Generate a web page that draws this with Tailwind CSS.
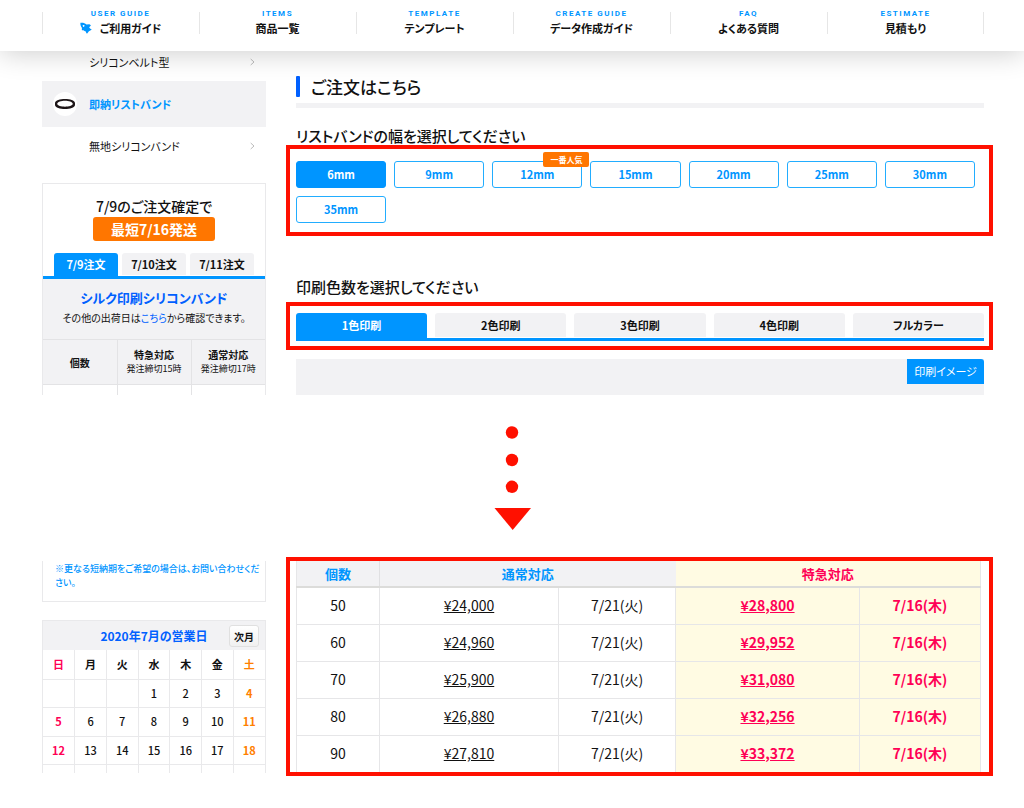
<!DOCTYPE html>
<html lang="ja">
<head>
<meta charset="utf-8">
<meta name="viewport" content="width=device-width, initial-scale=1">
<title>リストバンドのご注文</title>
<script src="https://cdn.jsdelivr.net/npm/@tailwindcss/browser@4"></script>
</head>
<body class="bg-white text-[#111] font-['Noto_Sans_CJK_JP',sans-serif] [font-feature-settings:'palt']">

<header class="relative z-10 h-[51px] bg-white pl-[42px] pr-10 pt-2 shadow-[0_2px_28px_rgba(0,0,0,0.2)]">
  <nav class="grid grid-cols-6" aria-label="メイン">
    <a href="#" class="relative flex flex-col items-center before:absolute before:left-0 before:top-1 before:h-[22px] before:w-px before:bg-[#e6e6e6]">
      <span class="font-['Roboto'] text-[8px] leading-3 font-bold tracking-[1.5px] text-[#0095ff]">USER GUIDE</span>
      <span class="flex items-center gap-2 text-[11px] leading-4 font-bold">
        <svg class="h-3 w-3" viewBox="0 0 12 12" fill="#0095ff" aria-hidden="true"><path fill-rule="evenodd" d="M.4.8C2.600.4 4.800.9 6.500 2.400L9.300 2.300C10 2.500 10.500 2.900 10.900 3.600L9.200 5.300C9.800 6.200 10.200 6.800 11.800 7.600 10.800 8.500 9.800 9 8.900 9.200L7 11.700C6.300 11.300 5.900 10.500 5.800 9.500 4.800 9.300 4.100 8.900 3.500 8.200L2 8.300C1.700 7.600 1.700 6.900 2 6.100.8 4.600.2 2.700.4.800ZM3.600 3a.9.9 0 1 0 .01 0Z"/></svg>
        ご利用ガイド</span>
    </a>
    <a href="#" class="relative flex flex-col items-center before:absolute before:left-0 before:top-1 before:h-[22px] before:w-px before:bg-[#e6e6e6]">
      <span class="font-['Roboto'] text-[8px] leading-3 font-bold tracking-[1.5px] text-[#0095ff]">ITEMS</span>
      <span class="text-[11px] leading-4 font-bold">商品一覧</span>
    </a>
    <a href="#" class="relative flex flex-col items-center before:absolute before:left-0 before:top-1 before:h-[22px] before:w-px before:bg-[#e6e6e6]">
      <span class="font-['Roboto'] text-[8px] leading-3 font-bold tracking-[1.5px] text-[#0095ff]">TEMPLATE</span>
      <span class="text-[11px] leading-4 font-bold">テンプレート</span>
    </a>
    <a href="#" class="relative flex flex-col items-center before:absolute before:left-0 before:top-1 before:h-[22px] before:w-px before:bg-[#e6e6e6]">
      <span class="font-['Roboto'] text-[8px] leading-3 font-bold tracking-[1.5px] text-[#0095ff]">CREATE GUIDE</span>
      <span class="text-[11px] leading-4 font-bold">データ作成ガイド</span>
    </a>
    <a href="#" class="relative flex flex-col items-center before:absolute before:left-0 before:top-1 before:h-[22px] before:w-px before:bg-[#e6e6e6]">
      <span class="font-['Roboto'] text-[8px] leading-3 font-bold tracking-[1.5px] text-[#0095ff]">FAQ</span>
      <span class="text-[11px] leading-4 font-bold">よくある質問</span>
    </a>
    <a href="#" class="relative flex flex-col items-center before:absolute before:left-0 before:top-1 before:h-[22px] before:w-px before:bg-[#e6e6e6] after:absolute after:right-0 after:top-1 after:h-[22px] after:w-px after:bg-[#e6e6e6]">
      <span class="font-['Roboto'] text-[8px] leading-3 font-bold tracking-[1.5px] text-[#0095ff]">ESTIMATE</span>
      <span class="text-[11px] leading-4 font-bold">見積もり</span>
    </a>
  </nav>
</header>

<section class="flex gap-5 pl-[42px] pr-[31px]">
  <aside class="w-56 shrink-0">
    <nav aria-label="商品">
      <a href="#" class="flex h-[22px] items-center justify-between pl-[47px] pr-[11px] text-[11px]">シリコンベルト型
        <svg class="h-2 w-[5px]" viewBox="0 0 5 8" fill="none" stroke="#bbb" aria-hidden="true"><path d="M.7 1 4 4 .7 7"/></svg></a>
      <a href="#" class="mt-2 flex h-[46px] items-center gap-3 bg-[#f2f2f4] pl-[11px] text-[11px] font-bold text-[#0095ff]">
        <svg class="h-6 w-6" viewBox="0 0 24 24" aria-hidden="true"><circle cx="12" cy="12" r="12" fill="#fff"/><path fill="#1d1517" fill-rule="evenodd" d="M2 11C2.500 5.700 21.500 5.700 22 11V13C21.500 18.300 2.500 18.300 2 13ZM4.200 11.800C4.700 15.600 19.300 15.600 19.800 11.800 19.300 7.600 4.700 7.600 4.200 11.800Z"/></svg>
        即納リストバンド</a>
      <a href="#" class="flex h-[38px] items-center justify-between pl-[47px] pr-[11px] text-[11px]">無地シリコンバンド
        <svg class="h-2 w-[5px]" viewBox="0 0 5 8" fill="none" stroke="#bbb" aria-hidden="true"><path d="M.7 1 4 4 .7 7"/></svg></a>
    </nav>

    <div class="mt-[18px] h-[212px] overflow-hidden border border-b-0 border-[#e9e9eb]">
      <div class="flex flex-col items-center pt-3 text-[14px]">
        <p class="leading-5 font-medium">7/9のご注文確定で</p>
        <p class="mt-px h-6 w-[122px] rounded-[3px] bg-[#ff7600] text-center leading-6 font-bold text-white">最短7/16発送</p>
      </div>
      <div class="mt-3 grid grid-cols-3 gap-1 border-b-3 border-[#0095ff] px-[11px] text-[11px] font-bold">
        <button type="button" class="h-[23px] rounded-t-[3px] bg-[#0095ff] text-white">7/9注文</button>
        <button type="button" class="h-[22px] rounded-t-[3px] bg-[#f2f2f4]">7/10注文</button>
        <button type="button" class="h-[22px] rounded-t-[3px] bg-[#f2f2f4]">7/11注文</button>
      </div>
      <div class="h-[60px] bg-[#f2f2f4] pt-[9px] text-center">
        <h2 class="text-[13px] leading-5 font-bold text-[#0060ff]">シルク印刷シリコンバンド</h2>
        <p class="text-[10px] leading-5">その他の出荷日は<a href="#" class="text-[#0060ff]">こちら</a>から確認できます。</p>
      </div>
      <table class="w-full table-fixed border-collapse text-[10px]">
        <thead class="bg-[#f2f2f4]">
          <tr class="h-[45px] border-y border-[#e3e3e5]">
            <th scope="col" class="border-r border-[#e3e3e5] font-bold">個数</th>
            <th scope="col" class="border-r border-[#e3e3e5] leading-[14px] font-bold">特急対応<span class="block text-[9px] font-normal">発注締切15時</span></th>
            <th scope="col" class="leading-[14px] font-bold">通常対応<span class="block text-[9px] font-normal">発注締切17時</span></th>
          </tr>
        </thead>
        <tbody>
          <tr class="h-7"><td class="border-r border-[#e3e3e5]"></td><td class="border-r border-[#e3e3e5]"></td><td></td></tr>
        </tbody>
      </table>
    </div>
  </aside>

  <main class="min-w-0 flex-1">
    <h1 class="mr-[9px] ml-[10px] flex h-[57px] items-end border-b-5 border-[#f2f2f4] pb-[6px] text-[17px] leading-[21px] font-medium"><span class="mr-[11px] h-[21px] w-1 rounded-[1px] bg-[#0060ff]"></span>ご注文はこちら</h1>
    <h2 class="mt-[18px] ml-[10px] h-[19px] text-[15px] leading-5 font-medium">リストバンドの幅を選択してください</h2>
    <div class="h-[91px] border-4 border-[#ff1000] pt-3 pr-[14px] pl-[6px]">
      <div class="grid grid-cols-7 gap-2 text-[11px] font-bold text-[#0095ff]">
        <button type="button" class="h-[27px] rounded-[3px] border border-[#0095ff] bg-[#0095ff] text-white">6mm</button>
        <button type="button" class="h-[27px] rounded-[3px] border border-[#22adff]">9mm</button>
        <button type="button" class="relative h-[27px] rounded-[3px] border border-[#22adff]">12mm<span class="absolute -top-[10px] -right-2 h-[15px] w-[46px] rounded-[2px] bg-[#ff7600] text-center text-[8px] leading-[15px] text-white">一番人気</span></button>
        <button type="button" class="h-[27px] rounded-[3px] border border-[#22adff]">15mm</button>
        <button type="button" class="h-[27px] rounded-[3px] border border-[#22adff]">20mm</button>
        <button type="button" class="h-[27px] rounded-[3px] border border-[#22adff]">25mm</button>
        <button type="button" class="h-[27px] rounded-[3px] border border-[#22adff]">30mm</button>
        <button type="button" class="h-[27px] rounded-[3px] border border-[#22adff]">35mm</button>
      </div>
    </div>
    <h2 class="mt-[41px] ml-[10px] h-[25px] text-[15px] leading-5 font-medium">印刷色数を選択してください</h2>
    <div class="h-12 border-4 border-[#ff1000] pt-[7px] pr-[5px] pl-[6px]">
      <div class="grid grid-cols-5 gap-2 border-b-3 border-[#0095ff] text-[11px] font-bold">
        <button type="button" class="h-[25px] rounded-t-[3px] bg-[#0095ff] text-white">1色印刷</button>
        <button type="button" class="h-6 rounded-t-[3px] bg-[#f2f2f4]">2色印刷</button>
        <button type="button" class="h-6 rounded-t-[3px] bg-[#f2f2f4]">3色印刷</button>
        <button type="button" class="h-6 rounded-t-[3px] bg-[#f2f2f4]">4色印刷</button>
        <button type="button" class="h-6 rounded-t-[3px] bg-[#f2f2f4]">フルカラー</button>
      </div>
    </div>
    <div class="mt-[9px] mr-[9px] ml-[10px] flex h-9 items-start justify-end bg-[#f2f2f4]">
      <button type="button" class="h-[25px] w-[77px] rounded-tr-[3px] bg-[#0095ff] text-[11px] text-white">印刷イメージ</button>
    </div>
  </main>
</section>

<div class="flex h-[162px] justify-center pt-[31px]">
  <svg class="h-[104px] w-[38px]" viewBox="0 0 38 104" fill="#ff1000" aria-hidden="true"><circle cx="19" cy="6.500" r="6.200"/><circle cx="19" cy="34" r="6.200"/><circle cx="19" cy="60.800" r="6.200"/><path d="M1.500 82H38L19.700 104Z"/></svg>
</div>

<section class="flex gap-5 pl-[42px] pr-[31px]">
  <aside class="w-56 shrink-0 pt-1">
    <p class="h-[41px] border border-t-0 border-[#e9e9eb] pr-1 pl-3 pt-px text-[9px] leading-[14px] font-medium text-[#0095ff]">※更なる短納期をご希望の場合は、お問い合わせください。</p>
    <div class="mt-[18px] h-[153px] overflow-hidden border-x border-[#e9e9eb]">
      <div class="relative flex h-[30px] items-center justify-center border-t border-[#e9e9eb] bg-[#f2f2f4]">
        <h2 class="text-[12px] font-bold text-[#0060ff]">2020年7月の営業日</h2>
        <button type="button" class="absolute top-1 right-[6px] h-[22px] w-[30px] rounded-[3px] border border-[#e0e0e0] bg-linear-to-b from-white to-[#f0f0f0] text-[10px] font-bold">次月</button>
      </div>
      <table class="w-full table-fixed border-collapse text-center text-[11px] font-medium [&_td]:border-r [&_td]:border-[#e9e9eb] [&_th]:border-r [&_th]:border-[#e9e9eb] [&_td:last-child]:border-r-0 [&_th:last-child]:border-r-0">
        <thead><tr class="h-[29px] border-b border-[#e9e9eb]">
          <th scope="col" class="text-[#ff0055]">日</th><th scope="col">月</th><th scope="col">火</th><th scope="col">水</th><th scope="col">木</th><th scope="col">金</th><th scope="col" class="text-[#ff8000]">土</th></tr></thead>
        <tbody>
          <tr class="h-7 border-b border-[#e9e9eb]"><td></td><td></td><td></td><td>1</td><td>2</td><td>3</td><td class="font-bold text-[#ff8000]">4</td></tr>
          <tr class="h-[29px] border-b border-[#e9e9eb]"><td class="font-bold text-[#ff0055]">5</td><td>6</td><td>7</td><td>8</td><td>9</td><td>10</td><td class="font-bold text-[#ff8000]">11</td></tr>
          <tr class="h-7 border-b border-[#e9e9eb]"><td class="font-bold text-[#ff0055]">12</td><td>13</td><td>14</td><td>15</td><td>16</td><td>17</td><td class="font-bold text-[#ff8000]">18</td></tr>
          <tr class="h-7"><td></td><td></td><td></td><td></td><td></td><td></td><td></td></tr>
        </tbody>
      </table>
    </div>
  </aside>

  <div class="h-[219px] min-w-0 flex-1 overflow-hidden border-4 border-[#ff1000] pr-2 pl-[6px]">
    <table class="w-full table-fixed border-collapse border-x border-[#e6e6e8] text-center text-[14px] [&_td]:border [&_td]:border-[#e6e6e8]">
      <colgroup><col class="w-[83px]"><col class="w-[179px]"><col class="w-[117px]"><col class="w-[184px]"><col></colgroup>
      <thead>
        <tr class="h-[26px] border-b-2 border-[#dcdcda] text-[13px] font-bold">
          <th scope="col" class="border-r border-r-[#e0e0e2] bg-[#f2f2f4] text-[#0095ff]">個数</th>
          <th scope="col" colspan="2" class="bg-[#f2f2f4] text-[#0095ff]">通常対応</th>
          <th scope="col" colspan="2" class="bg-[#fffbe3] text-[#ff0055]">特急対応</th>
        </tr>
      </thead>
      <tbody>
        <tr class="h-[37px]"><td>50</td><td><a href="#" class="underline">¥24,000</a></td><td>7/21(火)</td><td class="bg-[#fffbe3] font-bold text-[#ff0055]"><a href="#" class="underline">¥28,800</a></td><td class="bg-[#fffbe3] font-bold text-[#ff0055]">7/16(木)</td></tr>
        <tr class="h-[37px]"><td>60</td><td><a href="#" class="underline">¥24,960</a></td><td>7/21(火)</td><td class="bg-[#fffbe3] font-bold text-[#ff0055]"><a href="#" class="underline">¥29,952</a></td><td class="bg-[#fffbe3] font-bold text-[#ff0055]">7/16(木)</td></tr>
        <tr class="h-[37px]"><td>70</td><td><a href="#" class="underline">¥25,900</a></td><td>7/21(火)</td><td class="bg-[#fffbe3] font-bold text-[#ff0055]"><a href="#" class="underline">¥31,080</a></td><td class="bg-[#fffbe3] font-bold text-[#ff0055]">7/16(木)</td></tr>
        <tr class="h-[37px]"><td>80</td><td><a href="#" class="underline">¥26,880</a></td><td>7/21(火)</td><td class="bg-[#fffbe3] font-bold text-[#ff0055]"><a href="#" class="underline">¥32,256</a></td><td class="bg-[#fffbe3] font-bold text-[#ff0055]">7/16(木)</td></tr>
        <tr class="h-[37px]"><td>90</td><td><a href="#" class="underline">¥27,810</a></td><td>7/21(火)</td><td class="bg-[#fffbe3] font-bold text-[#ff0055]"><a href="#" class="underline">¥33,372</a></td><td class="bg-[#fffbe3] font-bold text-[#ff0055]">7/16(木)</td></tr>
      </tbody>
    </table>
  </div>
</section>
<footer class="h-8"></footer>
</body>
</html>
